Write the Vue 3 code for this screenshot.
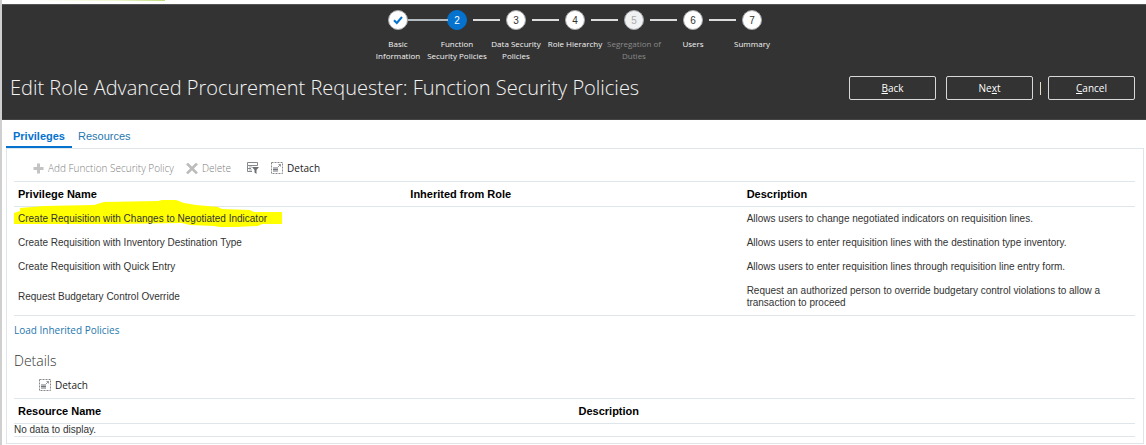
<script setup>
const steps = [
  { n: 1, label: 'Basic Information', state: 'done' },
  { n: 2, label: 'Function Security Policies', state: 'current' },
  { n: 3, label: 'Data Security Policies', state: 'next' },
  { n: 4, label: 'Role Hierarchy', state: 'next' },
  { n: 5, label: 'Segregation of Duties', state: 'disabled' },
  { n: 6, label: 'Users', state: 'next' },
  { n: 7, label: 'Summary', state: 'next' },
]

const privileges = [
  {
    name: 'Create Requisition with Changes to Negotiated Indicator',
    description: 'Allows users to change negotiated indicators on requisition lines.',
    marked: true,
  },
  {
    name: 'Create Requisition with Inventory Destination Type',
    description: 'Allows users to enter requisition lines with the destination type inventory.',
  },
  {
    name: 'Create Requisition with Quick Entry',
    description: 'Allows users to enter requisition lines through requisition line entry form.',
  },
  {
    name: 'Request Budgetary Control Override',
    description: 'Request an authorized person to override budgetary control violations to allow a transaction to proceed',
  },
]
</script>

<template>
  <div class="page">
    <div class="top-strip"><div class="accent"></div></div>

    <header class="banner">
      <ol class="train">
        <li v-for="s in steps" :key="s.n" class="step" :class="s.state">
          <span class="dot">
            <svg v-if="s.state === 'done'" width="12" height="12" viewBox="0 0 12 12" aria-label="Completed">
              <path d="M2 6.2 L4.8 9 L10 3" fill="none" stroke="#0572ce" stroke-width="2" />
            </svg>
            <template v-else>{{ s.n }}</template>
          </span>
          <span class="step-label">{{ s.label }}</span>
        </li>
      </ol>
      <div class="title-row">
        <h1>Edit Role Advanced Procurement Requester: Function Security Policies</h1>
        <div class="actions">
          <button type="button"><u>B</u>ack</button>
          <button type="button">Ne<u>x</u>t</button>
          <span class="divider"></span>
          <button type="button"><u>C</u>ancel</button>
        </div>
      </div>
    </header>

    <nav class="tabs">
      <a href="#privileges" class="tab active">Privileges</a>
      <a href="#resources" class="tab">Resources</a>
    </nav>

    <main class="panel">
      <div class="toolbar">
        <button type="button" class="tool add" disabled>
          <svg width="11" height="11" viewBox="0 0 11 11"><path d="M5.5 0.5V10.5M0.5 5.5H10.5" stroke="#c3c3c3" stroke-width="3" /></svg>
          Add Function Security Policy
        </button>
        <button type="button" class="tool delete" disabled>
          <svg width="12" height="11" viewBox="0 0 12 11"><path d="M1 0.5L11 10.5M11 0.5L1 10.5" stroke="#bcbcbc" stroke-width="2.6" /></svg>
          Delete
        </button>
        <button type="button" class="tool filter" aria-label="Query by Example">
          <svg width="12" height="12" viewBox="0 0 12 12">
            <path d="M0.5 0.5H10.5V3.5H0.5ZM0.5 3.5V9.5H5M0.5 6.5H4" fill="none" stroke="#85898d" stroke-width="1" />
            <path d="M2 5H5M2 8H5" stroke="#a5a9ad" stroke-width="1" />
            <path d="M5 5H12L9.5 8V12L7.5 10.5V8Z" fill="#6c7074" />
          </svg>
        </button>
        <button type="button" class="tool">
          <svg width="12" height="12" viewBox="0 0 12 12">
            <path d="M0.5 0.5H11.5V11.5H0.5Z" fill="none" stroke="#888" stroke-width="1" stroke-dasharray="2 1" />
            <path d="M2 5H7V10H2Z" fill="#b4b8bb" /><path d="M2 7.5H7" stroke="#777" />
            <path d="M7 5L9.5 2.5M7.5 2.5H9.5V4.5" fill="none" stroke="#999" />
          </svg>
          Detach
        </button>
      </div>

      <table class="grid privileges">
        <thead>
          <tr><th class="c-name">Privilege Name</th><th class="c-role">Inherited from Role</th><th>Description</th></tr>
        </thead>
        <tbody>
          <tr v-for="p in privileges" :key="p.name">
            <td :class="{ marked: p.marked }">
              <svg v-if="p.marked" class="marker" width="268" height="29" viewBox="0 0 268 29" aria-hidden="true">
                <path d="M0 14L6 12V9L30 7L80 6L90 3L144 2L148 1H162L170 4L182 6L204 8L208 10L236 11L240 13H268V25H248L244 27L222 28H206L200 27L176 26L168 24L100 25H0Z" fill="#ffff00" />
              </svg>
              <span>{{ p.name }}</span>
            </td>
            <td></td>
            <td>{{ p.description }}</td>
          </tr>
        </tbody>
      </table>

      <a href="#load" class="load">Load Inherited Policies</a>

      <h2>Details</h2>
      <div class="toolbar details-bar">
        <button type="button" class="tool">
          <svg width="12" height="12" viewBox="0 0 12 12">
            <path d="M0.5 0.5H11.5V11.5H0.5Z" fill="none" stroke="#888" stroke-width="1" stroke-dasharray="2 1" />
            <path d="M2 5H7V10H2Z" fill="#b4b8bb" /><path d="M2 7.5H7" stroke="#777" />
            <path d="M7 5L9.5 2.5M7.5 2.5H9.5V4.5" fill="none" stroke="#999" />
          </svg>
          Detach
        </button>
      </div>
      <table class="grid resources">
        <thead>
          <tr><th class="c-half">Resource Name</th><th>Description</th></tr>
        </thead>
        <tbody>
          <tr><td colspan="2">No data to display.</td></tr>
        </tbody>
      </table>
    </main>
  </div>
</template>

<style>
body {
  margin: 0;
  background: #fff;
}
</style>

<style scoped>
.page {
  box-sizing: border-box;
  min-height: 100vh;
  border-left: 2px solid #cfcfcf;
  font-family: "Liberation Sans", Arial, sans-serif;
  font-size: 11px;
  color: #333;
}
.top-strip {
  height: 4px;
}
.accent {
  width: 163px;
  height: 1px;
  background: linear-gradient(to right, #fff 20%, #eef6cf 70%, #bfdc7c);
}
.banner {
  box-sizing: border-box;
  height: 116px;
  background: #333;
  border-top: 1px solid #555;
  border-bottom: 1px solid #444;
  color: #f4f4f4;
}
.train {
  display: flex;
  justify-content: center;
  margin: 0;
  padding: 5px 0 0 2px;
  list-style: none;
  height: 66px;
  box-sizing: border-box;
}
.step {
  position: relative;
  width: 59px;
  display: flex;
  flex-direction: column;
  align-items: center;
}
.step + .step::before {
  content: "";
  position: absolute;
  top: 9px;
  left: -14px;
  width: 27px;
  height: 2px;
  background: #dcdcdc;
}
.step.current::before {
  left: -20px;
  width: 40px;
  height: 2px;
  background: #b4bcc2;
}
.dot {
  box-sizing: border-box;
  width: 20px;
  height: 20px;
  border: 1px solid #a4a8ac;
  border-radius: 50%;
  background: #fff;
  color: #333;
  font-size: 10px;
  display: flex;
  align-items: center;
  justify-content: center;
}
.current .dot {
  background: #0572ce;
  border-color: #0572ce;
  color: #fff;
}
.disabled .dot {
  background: #f0f1f3;
  color: #aaa;
}
.step-label {
  width: 60px;
  margin-top: 8px;
  font-family: "Open Sans", "Noto Sans", sans-serif;
  font-size: 8px;
  line-height: 12px;
  text-align: center;
}
.disabled .step-label {
  color: #8a8a8a;
}
.title-row {
  display: flex;
  align-items: center;
  justify-content: space-between;
  height: 34px;
  padding: 0 11px 0 8px;
}
h1 {
  margin: 0;
  font-family: "Open Sans", "Noto Sans", sans-serif;
  font-size: 20px;
  font-weight: 300;
  line-height: 28px;
  white-space: nowrap;
}
.actions {
  display: flex;
  align-items: center;
}
.actions button {
  box-sizing: border-box;
  width: 87px;
  height: 24px;
  padding: 0;
  border: 1px solid #d8d8d8;
  border-radius: 2px;
  background: transparent;
  color: #fff;
  font-family: "Open Sans", "Noto Sans", sans-serif;
  font-size: 10px;
}
.actions button + button {
  margin-left: 10px;
}
.divider {
  width: 1px;
  height: 13px;
  margin: 0 7px;
  background: #e4dfc0;
}
.tabs {
  display: flex;
  margin-left: 4px;
  height: 28px;
}
.tab {
  box-sizing: border-box;
  height: 28px;
  padding: 0 6px;
  line-height: 32px;
  text-decoration: none;
  color: #1f77ae;
}
.tab.active {
  padding: 0 7px;
  font-weight: bold;
  color: #0572ce;
  border-bottom: 2px solid #0572ce;
}
.panel {
  margin: 0 2px 0 4px;
  padding: 0 8px 6px 7px;
  border: 1px solid #dfe6eb;
}
.toolbar {
  display: flex;
  align-items: center;
  height: 32px;
  padding: 6px 0 0 19px;
  box-sizing: border-box;
}
.tool {
  display: flex;
  align-items: center;
  gap: 4px;
  padding: 0;
  border: 0;
  background: none;
  color: #222;
  font-family: "Open Sans", "Noto Sans", sans-serif;
  font-size: 10px;
  line-height: 14px;
}
.tool:disabled {
  color: #808080;
  font-weight: 300;
}
.delete {
  margin-left: 12px;
}
.filter {
  margin: 0 12px 0 16px;
}
.grid {
  width: 100%;
  table-layout: fixed;
  border-spacing: 0;
  border-top: 1px solid #dfe6eb;
  border-bottom: 1px solid #dfe6eb;
}
th {
  box-sizing: border-box;
  height: 25px;
  padding: 0 4px;
  border-bottom: 1px solid #dfe6eb;
  text-align: left;
  color: #000;
}
.c-name {
  width: 35%;
}
.c-role {
  width: 30%;
}
.c-half {
  width: 50%;
}
td {
  height: 24px;
  padding: 0 4px;
  font-size: 10px;
  line-height: 12px;
}
.privileges tr:last-child td {
  height: 36px;
}
.marked {
  position: relative;
}
.marked span {
  position: relative;
}
.marker {
  position: absolute;
  left: 0;
  top: -8px;
}
.load {
  display: block;
  width: fit-content;
  margin-top: 6px;
  font-family: "Open Sans", "Noto Sans", sans-serif;
  font-size: 10px;
  line-height: 16px;
  color: #1f77ae;
  text-decoration: none;
}
h2 {
  margin: 13px 0 0;
  font-family: "Open Sans", "Noto Sans", sans-serif;
  font-size: 14px;
  font-weight: 300;
  line-height: 20px;
}
.details-bar {
  height: 27px;
  padding: 1px 0 0 25px;
}
.resources td {
  height: 12px;
  padding: 0;
}
</style>
